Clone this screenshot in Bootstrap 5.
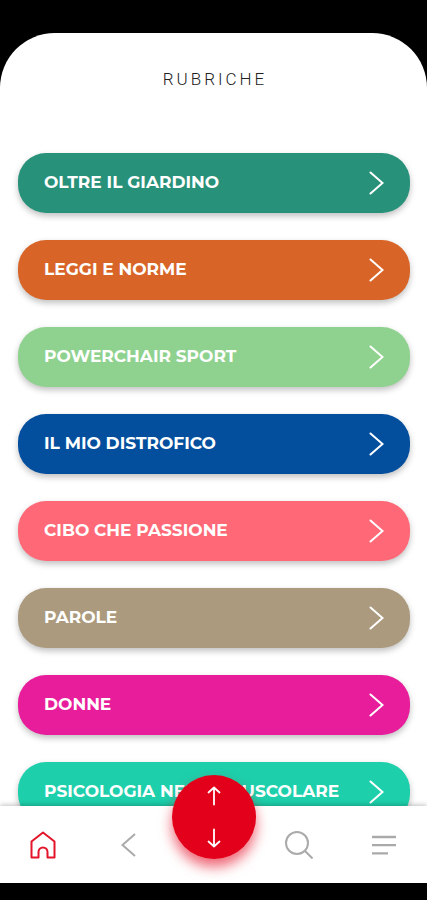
<!DOCTYPE html>
<html lang="it">
<head>
<meta charset="utf-8">
<meta name="viewport" content="width=device-width, initial-scale=1">
<title>Rubriche</title>
<link href="https://cdn.jsdelivr.net/npm/bootstrap@5.3.0/dist/css/bootstrap.min.css" rel="stylesheet">
<style>
  body { font-family: Montserrat, Inter, "Liberation Sans", sans-serif; background: #000; }
  .phone { padding: 33px 0 17px; }
  .screen { border-radius: 55px 55px 0 0; min-height: 0; }
  .content { min-height: 0; scrollbar-width: none; }
  .content::-webkit-scrollbar { display: none; }
  .title { font: 300 17px/24px Roboto, sans-serif; letter-spacing: 3px; color: #222; padding: 34px 0 62px 3px; }
  .topics { gap: 27px; padding: 0 17px 27px 18px; }
  .topic { height: 60px; flex: none; border-radius: 28px; padding: 0 26px; font-size: 17px; font-weight: 700; box-shadow: 0 3px 6px rgba(0,0,0,.25); }
  .green { background: #27917a; }
  .orange { background: #d86527; }
  .lime { background: #8fd28f; }
  .blue { background: #034f9e; }
  .coral { background: #ff6877; }
  .sand { background: #ab9a7d; }
  .pink { background: #e81d9b; }
  .teal { background: #1dcfab; }
  .tabs { height: 77px; flex: none; box-shadow: 0 -1px 5px rgba(0,0,0,.25); }
  .tab { color: #aaa; }
  .tab.active { color: #e2152a; }
  .fab { top: -31px; left: 50%; width: 84px; height: 84px; margin-left: -42px; background: #e2001a; box-shadow: 0 8px 13px rgba(226,0,26,.6); }
  svg { fill: none; stroke: currentColor; display: block; }
</style>
</head>
<body>
<div class="phone vh-100 d-flex flex-column">
  <div class="screen bg-white flex-fill d-flex flex-column overflow-hidden">
    <main class="content flex-fill overflow-auto">
      <h1 class="title text-center m-0">RUBRICHE</h1>
      <nav class="topics d-flex flex-column" aria-label="Rubriche">
        <a href="#" class="topic green d-flex align-items-center justify-content-between text-white text-decoration-none"><span>OLTRE IL GIARDINO</span><svg width="15" height="24" stroke-width="2" stroke-linecap="round" aria-hidden="true"><path d="M1.5 1.5 13.5 12 1.5 22.5"/></svg></a>
        <a href="#" class="topic orange d-flex align-items-center justify-content-between text-white text-decoration-none"><span>LEGGI E NORME</span><svg width="15" height="24" stroke-width="2" stroke-linecap="round" aria-hidden="true"><path d="M1.5 1.5 13.5 12 1.5 22.5"/></svg></a>
        <a href="#" class="topic lime d-flex align-items-center justify-content-between text-white text-decoration-none"><span>POWERCHAIR SPORT</span><svg width="15" height="24" stroke-width="2" stroke-linecap="round" aria-hidden="true"><path d="M1.5 1.5 13.5 12 1.5 22.5"/></svg></a>
        <a href="#" class="topic blue d-flex align-items-center justify-content-between text-white text-decoration-none"><span>IL MIO DISTROFICO</span><svg width="15" height="24" stroke-width="2" stroke-linecap="round" aria-hidden="true"><path d="M1.5 1.5 13.5 12 1.5 22.5"/></svg></a>
        <a href="#" class="topic coral d-flex align-items-center justify-content-between text-white text-decoration-none"><span>CIBO CHE PASSIONE</span><svg width="15" height="24" stroke-width="2" stroke-linecap="round" aria-hidden="true"><path d="M1.5 1.5 13.5 12 1.5 22.5"/></svg></a>
        <a href="#" class="topic sand d-flex align-items-center justify-content-between text-white text-decoration-none"><span>PAROLE</span><svg width="15" height="24" stroke-width="2" stroke-linecap="round" aria-hidden="true"><path d="M1.5 1.5 13.5 12 1.5 22.5"/></svg></a>
        <a href="#" class="topic pink d-flex align-items-center justify-content-between text-white text-decoration-none"><span>DONNE</span><svg width="15" height="24" stroke-width="2" stroke-linecap="round" aria-hidden="true"><path d="M1.5 1.5 13.5 12 1.5 22.5"/></svg></a>
        <a href="#" class="topic teal d-flex align-items-center justify-content-between text-white text-decoration-none"><span>PSICOLOGIA NEUROMUSCOLARE</span><svg width="15" height="24" stroke-width="2" stroke-linecap="round" aria-hidden="true"><path d="M1.5 1.5 13.5 12 1.5 22.5"/></svg></a>
      </nav>
    </main>
    <nav class="tabs position-relative bg-white row g-0 align-items-center" aria-label="Navigazione">
      <a href="#" class="tab active col d-flex justify-content-center" aria-label="Home"><svg width="26" height="28" stroke-width="2" stroke-linejoin="round"><path d="M1.5 26.5V10.5L13 1.5 24.5 10.5V26.5H17.5V21A4.5 4.5 0 0 0 8.5 21V26.5Z"/></svg></a>
      <button type="button" class="tab col btn border-0 p-0 d-flex justify-content-center" aria-label="Indietro"><svg width="15" height="24" stroke-width="2"><path d="M14 1 1.5 12 14 23"/></svg></button>
      <div class="col"></div>
      <button type="button" class="tab col btn border-0 p-0 d-flex justify-content-center" aria-label="Cerca"><svg width="28" height="28" stroke-width="2"><circle cx="12" cy="12" r="11"/><path d="M19.5 19.5 27.5 27.5"/></svg></button>
      <button type="button" class="tab col btn border-0 p-0 d-flex justify-content-center" aria-label="Menu"><svg width="24" height="20" stroke-width="2.3"><path d="M0 2H24M0 10.200H24M0 18.400H16"/></svg></button>
      <button type="button" class="fab btn border-0 p-0 rounded-circle position-absolute text-white d-flex flex-column align-items-center justify-content-center" aria-label="Scorri">
        <svg width="14" height="62" stroke-width="1.800" stroke-linecap="round" stroke-linejoin="round"><path d="M7 18.500V1.500M1.500 6.500 7 1.500 12.500 6.500M7 43.500V60.500M1.500 55.500 7 60.500 12.500 55.500"/></svg>
      </button>
    </nav>
  </div>
</div>
<script src="https://cdn.jsdelivr.net/npm/bootstrap@5.3.0/dist/js/bootstrap.bundle.min.js"></script>
</body>
</html>
